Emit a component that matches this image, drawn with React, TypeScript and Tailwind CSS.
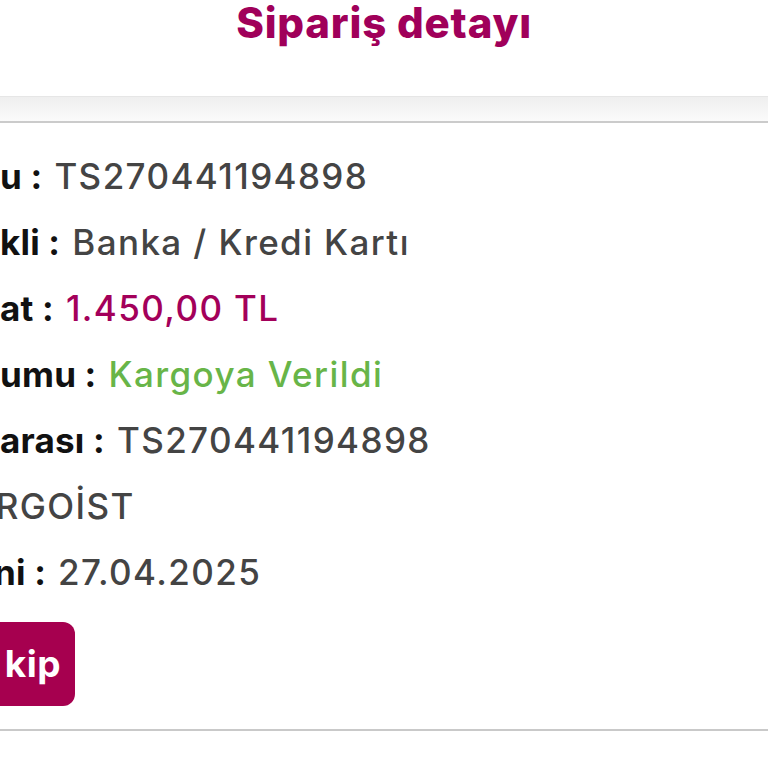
import React from "react";

const rows: { label: string; value: string; color: string; ml: string }[] = [
  { label: "u :", value: "TS270441194898", color: "text-[#444444]", ml: "ml-0" },
  { label: "kli :", value: "Banka / Kredi Kartı", color: "text-[#444444]", ml: "ml-0" },
  { label: "at :", value: "1.450,00 TL", color: "text-[#a3005a]", ml: "ml-0" },
  { label: "umu :", value: "Kargoya Verildi", color: "text-[#68b548]", ml: "ml-0" },
  { label: "arası :", value: "TS270441194898", color: "text-[#444444]", ml: "ml-0" },
  { label: "", value: "KARGOİST", color: "text-[#444444]", ml: "-ml-[56px]" },
  { label: "ni :", value: "27.04.2025", color: "text-[#444444]", ml: "-ml-[6px]" },
];

export default function App() {
  return (
    <div
      className="w-[768px] h-[768px] bg-white overflow-hidden flex flex-col"
      style={{ fontFamily: 'Inter, "Noto Sans", sans-serif' }}
    >
      <div className="h-[96px] flex justify-center">
        <h1 className="text-[42px] leading-[46px] font-extrabold text-[#a0005a] tracking-[0.8px]">
          Sipariş detayı
        </h1>
      </div>
      <div className="h-[27px] border-t border-[#e6e6e6] bg-gradient-to-b from-[#efefef] to-[#fbfbfb] border-b-2 border-b-[#cbcbcb]" />
      <div className="flex flex-col pt-[20px]">
        {rows.map((r, i) => (
          <div key={i} className="h-[66px] flex items-center whitespace-nowrap text-[35px]">
            <div className={`${r.ml} flex items-center`}>
              {r.label && (
                <span className="font-bold text-[#111111] mr-[12px] tracking-[0.2px]">{r.label}</span>
              )}
              <span className={`font-medium tracking-[1.4px] ${r.color}`}>{r.value}</span>
            </div>
          </div>
        ))}
        <div className="mt-[17px] h-[84px] flex">
          <div className="-ml-[20px] w-[95px] h-[84px] rounded-[12px] bg-[#a6004f] flex items-center justify-end pr-[14px]">
            <span className="text-white font-bold text-[37px] tracking-[0.5px]">kip</span>
          </div>
        </div>
        <div className="mt-[23px] h-[2px] bg-[#c9c9c9]" />
      </div>
    </div>
  );
}
